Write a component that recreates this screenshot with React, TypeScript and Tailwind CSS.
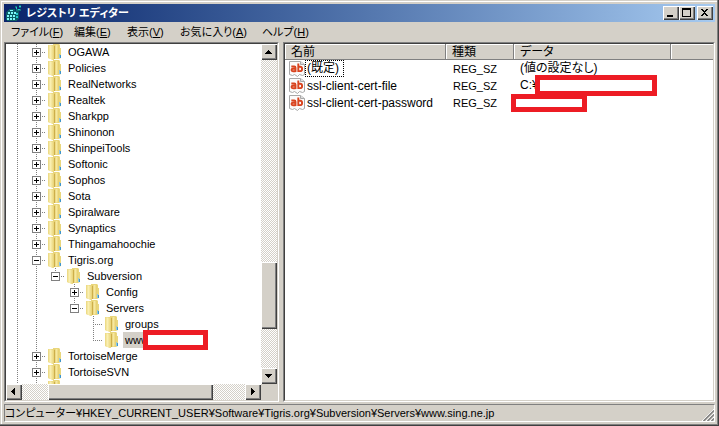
import React from "react";

const raised =
  "bg-[#d4d0c8] shadow-[inset_1px_1px_0_#ffffff,inset_-1px_-1px_0_#404040,inset_-2px_-2px_0_#808080]";
const sunken =
  "border border-t-[#808080] border-l-[#808080] border-r-white border-b-white";
const sunkenInner =
  "border border-t-[#404040] border-l-[#404040] border-r-[#d4d0c8] border-b-[#d4d0c8]";
const track =
  "bg-[conic-gradient(#ffffff_25%,#d4d0c8_0_50%,#ffffff_0_75%,#d4d0c8_0)] bg-[length:2px_2px]";
const vDots =
  "w-px bg-[repeating-linear-gradient(to_bottom,#808080_0_1px,transparent_1px_2px)]";
const hDots =
  "h-px bg-[repeating-linear-gradient(to_right,#808080_0_1px,transparent_1px_2px)]";

type Node = {
  name: string;
  box?: "+" | "-";
  guides?: boolean[];
  last?: boolean;
  selected?: boolean;
};

const nodes: Node[] = [
  ...[
    "OGAWA", "Policies", "RealNetworks", "Realtek", "Sharkpp", "Shinonon",
    "ShinpeiTools", "Softonic", "Sophos", "Sota", "Spiralware", "Synaptics",
    "Thingamahoochie",
  ].map((name): Node => ({ name, box: "+" })),
  { name: "Tigris.org", box: "-" },
  { name: "Subversion", box: "-", guides: [true, true], last: true },
  { name: "Config", box: "+", guides: [true, true, false] },
  { name: "Servers", box: "-", guides: [true, true, false], last: true },
  { name: "groups", guides: [true, true, false, false] },
  { name: "www", guides: [true, true, false, false], last: true, selected: true },
  { name: "TortoiseMerge", box: "+" },
  { name: "TortoiseSVN", box: "+" },
  { name: "Trolltech", box: "+" },
];

function Folder() {
  return (
    <svg className="block h-4 w-4" viewBox="0 0 16 16" aria-hidden="true">
      <defs>
        <linearGradient id="front" x1="0" x2="1" y1="0" y2="0">
          <stop offset="0" stopColor="#ead67c" />
          <stop offset="0.4" stopColor="#faf0b4" />
          <stop offset="1" stopColor="#e8d274" />
        </linearGradient>
        <linearGradient id="back" x1="0" x2="1" y1="0" y2="0">
          <stop offset="0" stopColor="#dfc662" />
          <stop offset="0.5" stopColor="#f6e8a0" />
          <stop offset="1" stopColor="#e4cc68" />
        </linearGradient>
      </defs>
      <path d="M2 1h5V0h6l1 1v3h1v10l-2 1H8l-1 1-5-2z" fill="#e9d67c" />
      <path d="M8 1h5v13l-5 1z" fill="url(#back)" />
      <path d="M2 1l6 1v14l-6-2z" fill="url(#front)" />
      <path d="M8 2h1v13H8z" fill="#cdae4a" />
      <path d="M13 10h1v4h-1z" fill="#8fc8e4" />
      <path d="M14 11h1v3h-1z" fill="#3f95cc" />
    </svg>
  );
}

function TreeRow({ node }: { node: Node }) {
  const guides = node.guides ?? [true];
  return (
    <li className="flex h-4 pl-[2px]">
      {guides.map((on, i) => (
        <span key={i} className="flex w-[19px] shrink-0 justify-center">
          {on && <span className={vDots} />}
        </span>
      ))}
      <span className="grid w-[19px] shrink-0 grid-cols-[9px_1fr] grid-rows-[8px_1fr]">
        <span className={`col-start-2 row-start-1 ${vDots}`} />
        {!node.last && <span className={`col-start-2 row-start-2 ${vDots}`} />}
        <span className={`col-start-2 row-start-2 ${hDots}`} />
        {node.box && (
          <button
            type="button"
            aria-label={node.name}
            className="col-span-2 col-start-1 row-span-2 row-start-1 mt-1 ml-[5px] flex h-[9px] w-[9px] items-center justify-center border border-[#808080] bg-white"
          >
            <svg className="block h-[7px] w-[7px] shrink-0" viewBox="0 0 7 7" shapeRendering="crispEdges">
              <path d={node.box === "+" ? "M1 3h5v1H1zM3 1h1v5H3z" : "M1 3h5v1H1z"} />
            </svg>
          </button>
        )}
      </span>
      <span className="w-5 shrink-0">
        <Folder />
      </span>
      <span className={`px-[2px] whitespace-nowrap ${node.selected ? "relative bg-[#d4d0c8]" : ""}`}>
        {node.name}
        {node.selected && (
          <span className="absolute -top-[2px] left-5 h-5 w-[65px] border-[5px] border-[#ed1c24] bg-white" />
        )}
      </span>
    </li>
  );
}

function Arrow({ dir }: { dir: "up" | "down" | "left" | "right" }) {
  const d = {
    up: "M7 6h1v1h1v1h1v1h1v1H4V9h1V8h1V7h1z",
    down: "M4 6h7v1h-1v1H9v1H8v1H7V9H6V8H5V7H4z",
    left: "M9 4v7H8v-1H7V9H6V8H5V7h1V6h1V5h1V4z",
    right: "M6 4h1v1h1v1h1v1h1v1H9v1H8v1H7v1H6z",
  }[dir];
  return (
    <button type="button" aria-label={dir} className={`h-4 w-4 shrink-0 ${raised}`}>
      <svg className="block h-4 w-4" viewBox="0 0 16 16" shapeRendering="crispEdges">
        <path d={d} />
      </svg>
    </button>
  );
}

function ValueIcon() {
  return (
    <svg className="block h-4 w-4 shrink-0" viewBox="0 0 16 16" aria-hidden="true">
      <path d="M.5.5h11l4 3v10l-2 1-3-1-2 2-3-2-2 1-3-1z" fill="#fbfbfb" stroke="#a8a8a8" />
      <path d="M11.5.5v3h4" fill="#ddd" stroke="#a8a8a8" />
      <g fill="none" stroke="#d9441f" strokeWidth="1.9">
        <path d="M2.300 5.500h3q1.200 0 1.200 1.200V11M6.500 7.800h-2.500q-1.500 0-1.500 1.200t1.500 1.200h2.500" />
        <path d="M9.300 2.500v8.500M9.300 5.700h1.800q2 0 2 2.200t-2 2.200H9.300" />
      </g>
    </svg>
  );
}

const menu: [string, string, string][] = [
  ["ファイル", "F", "w-[63px]"],
  ["編集", "E", "w-[53px]"],
  ["表示", "V", "w-[53px]"],
  ["お気に入り", "A", "w-[82px]"],
  ["ヘルプ", "H", "w-[60px]"],
];

const values = [
  { name: "(既定)", data: "(値の設定なし)", cover: "" },
  { name: "ssl-client-cert-file", data: "C:¥", cover: "-top-[2px] left-[15px] h-[21px] w-[122px]" },
  { name: "ssl-client-cert-password", data: "", cover: "top-0 -left-[9px] h-[18px] w-[76px]" },
];

export default function App() {
  return (
    <div className="flex h-screen flex-col bg-[#d4d0c8] p-1 font-['Liberation_Sans','Noto_Sans_CJK_JP',sans-serif] text-[11px] leading-4 text-black shadow-[inset_-1px_-1px_0_#404040,inset_-2px_-2px_0_#808080,inset_1px_1px_0_#d4d0c8,inset_2px_2px_0_#ffffff] [font-feature-settings:'palt']">
      <header className="flex h-[18px] shrink-0 items-center bg-linear-to-r from-[#0a246a] to-[#a6caf0] pr-[2px] pl-[2px]">
        <svg className="h-4 w-4 shrink-0" viewBox="0 0 16 16" shapeRendering="crispEdges" aria-hidden="true">
          <path d="M3 4h6v2h4v8l-3 2H1l-1-2V7z" fill="#0b5f66" />
          <path d="M9 1h2v2H9zM13 0h2v3h-2zM10 4h5v2h-5z" fill="#12777c" />
          <path d="M4 5h3v1H4zM2 7h2v2H2zM5 7h2v2H5zM8 7h2v2H8zM1 10h2v2H1zM4 10h2v2H4zM7 10h2v2H7zM1 13h2v2H1zM4 13h2v2H4zM7 13h2v2H7z" fill="#7ff8f8" />
          <path d="M10 8h2v2h-2zM10 11h2v2h-2zM10 2h1v2h-1zM13 1h2v1h-2zM12 4h2v1h-2z" fill="#25c8cc" />
        </svg>
        <h1 className="flex-1 pl-1 font-bold whitespace-nowrap text-white">レジストリ エディター</h1>
        <button type="button" aria-label="最小化" className={`h-[14px] w-4 ${raised}`}>
          <svg className="block" width="16" height="14" shapeRendering="crispEdges"><path d="M4 9h6v2H4z" /></svg>
        </button>
        <button type="button" aria-label="最大化" className={`h-[14px] w-4 ${raised}`}>
          <svg className="block" width="16" height="14" shapeRendering="crispEdges"><path d="M3 2h9v9H3zM4 4v6h7V4z" fillRule="evenodd" /></svg>
        </button>
        <button type="button" aria-label="閉じる" className={`ml-[2px] h-[14px] w-4 ${raised}`}>
          <svg className="block" width="16" height="14" shapeRendering="crispEdges">
            <path d="M4 3h2v1h1v1h1V4h1V3h2v1h-1v1H9v1H8v1h1v1h1v1h1v1H9V9H8V8H7v1H6v1H4V9h1V8h1V7h1V6H6V5H5V4H4z" />
          </svg>
        </button>
      </header>

      <nav className="flex h-5 shrink-0 items-center pl-[7px]">
        {menu.map(([label, key, width]) => (
          <button key={key} type="button" className={`text-left whitespace-nowrap ${width}`}>
            {label}(<u>{key}</u>)
          </button>
        ))}
      </nav>

      <main className="flex min-h-0 flex-1 gap-1">
        <section className={`flex w-[275px] shrink-0 ${sunken}`}>
          <div className={`grid min-w-0 flex-1 grid-cols-[1fr_16px] grid-rows-[minmax(0,1fr)_16px] ${sunkenInner}`}>
            <ul className="overflow-hidden bg-white">
              {nodes.map((node) => <TreeRow key={node.name} node={node} />)}
            </ul>
            <div className={`flex flex-col ${track}`}>
              <Arrow dir="up" />
              <div className="grow-[202]" />
              <div className={`grow-[67] ${raised}`} />
              <div className="grow-[39]" />
              <Arrow dir="down" />
            </div>
            <div className={`flex ${track}`}>
              <Arrow dir="left" />
              <div className="grow-[26]" />
              <div className={`grow-[165] ${raised}`} />
              <div className="grow-[32]" />
              <Arrow dir="right" />
            </div>
            <div className="bg-[#d4d0c8]" />
          </div>
        </section>

        <section className={`flex min-w-0 flex-1 ${sunken}`}>
          <div className={`min-w-0 flex-1 overflow-hidden bg-white ${sunkenInner}`}>
            <table className="w-full table-fixed border-collapse">
              <colgroup>
                <col className="w-[161px]" />
                <col className="w-[68px]" />
                <col className="w-[157px]" />
                <col />
              </colgroup>
              <thead>
                <tr className="h-4 bg-[#d4d0c8] text-left text-[12px]">
                  {["名前", "種類", "データ"].map((h) => (
                    <th key={h} className="p-0 pl-[6px] leading-4 font-normal shadow-[inset_-1px_-1px_0_#808080,inset_1px_1px_0_#ffffff]">
                      {h}
                    </th>
                  ))}
                  <td className="p-0 shadow-[inset_0_-1px_0_#808080,inset_1px_1px_0_#ffffff]" />
                </tr>
              </thead>
              <tbody>
                {values.map((v, i) => (
                  <tr key={v.name} className="h-[17px]">
                    <td className="p-0 pl-1">
                      <div className="flex h-[17px] items-center text-[12px]">
                        <ValueIcon />
                        <span className={`whitespace-nowrap ${i === 0 ? "border border-dotted border-black px-px pr-1 leading-[15px]" : "px-[2px]"}`}>
                          {v.name}
                        </span>
                      </div>
                    </td>
                    <td className="p-0 pl-[7px]">REG_SZ</td>
                    <td className="p-0 pl-[6px]">
                      <div className="relative h-[17px] text-[12px] leading-4 whitespace-nowrap">
                        {v.data}
                        {v.cover && <span className={`absolute border-[5px] border-[#ed1c24] bg-white ${v.cover}`} />}
                      </div>
                    </td>
                    <td />
                  </tr>
                ))}
              </tbody>
            </table>
          </div>
        </section>
      </main>

      <footer className="mt-[2px] flex h-[18px] shrink-0 items-center justify-between border border-t-[#808080] border-r-white border-b-white border-l-[#808080]">
        <span className="whitespace-nowrap">
          コンピューター¥HKEY_CURRENT_USER¥Software¥Tigris.org¥Subversion¥Servers¥www.sing.ne.jp
        </span>
        <svg className="h-3 w-3 shrink-0 self-end" viewBox="0 0 12 12" aria-hidden="true">
          <path d="M0 12 12 0M4 12l8-8M8 12l4-4" stroke="#ffffff" />
          <path d="M1.500 12 12 1.500M5.500 12 12 5.500M9.500 12 12 9.500" stroke="#808080" strokeWidth="1.500" />
        </svg>
      </footer>
    </div>
  );
}
